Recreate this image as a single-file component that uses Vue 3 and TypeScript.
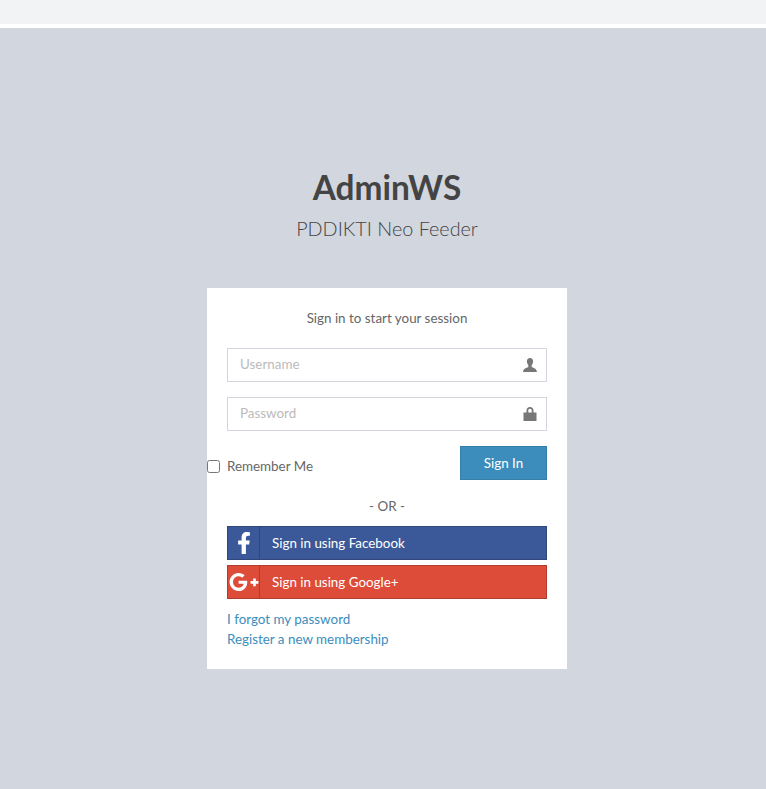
<template>
  <div class="page">
    <div class="topbar"></div>
    <main class="login">
      <header class="logo">
        <h1>AdminWS</h1>
        <p>PDDIKTI Neo Feeder</p>
      </header>

      <section class="box">
        <p class="msg">Sign in to start your session</p>

        <form class="form" @submit.prevent>
          <div v-for="f in fields" :key="f.name" class="field">
            <input :type="f.type" :placeholder="f.name" />
            <svg class="field-icon" viewBox="0 0 16 16" aria-hidden="true">
              <path :d="f.icon" />
            </svg>
          </div>

          <div class="actions">
            <label class="remember"><input type="checkbox" />Remember Me</label>
            <button type="submit" class="signin">Sign In</button>
          </div>
        </form>

        <p class="or">- OR -</p>

        <a v-for="s in socials" :key="s.label" href="#" class="social" :class="s.cls">
          <span class="social-icon">
            <svg :viewBox="s.box" :class="s.cls + '-glyph'" aria-hidden="true"><path :d="s.icon" /></svg>
          </span>
          <span class="social-label">{{ s.label }}</span>
        </a>

        <div class="links">
          <a href="#">I forgot my password</a>
          <a href="#">Register a new membership</a>
        </div>
      </section>
    </main>
  </div>
</template>

<script setup lang="ts">
const fields = [
  {
    name: 'Username',
    type: 'text',
    icon: 'M8 1C6 1 4.900 2.500 4.900 4.500C4.900 5.900 5.500 7.200 6.300 7.900V10.100C5.700 10.700 1.500 11.200 1 15H15C14.500 11.200 10.300 10.700 9.700 10.100V7.900C10.500 7.200 11.100 5.900 11.100 4.500C11.100 2.500 10 1 8 1Z',
  },
  {
    name: 'Password',
    type: 'password',
    icon: 'M8 1C5.800 1 4.500 2.600 4.500 4.500V6.500H1.500V15H14.500V6.500H11.500V4.500C11.500 2.600 10.200 1 8 1ZM6.300 4.500C6.300 3.400 7 2.700 8 2.700S9.700 3.400 9.700 4.500V6.500H6.300Z',
  },
]

const socials = [
  {
    label: 'Sign in using Facebook',
    cls: 'facebook',
    box: '0 0 320 512',
    icon: 'M279.14 288l14.22-92.66h-88.91v-60.13c0-25.35 12.42-50.06 52.24-50.06h40.42V6.26S260.43 0 225.36 0c-73.22 0-121.08 44.38-121.08 124.72v70.62H22.89V288h81.39v224h100.17V288z',
  },
  {
    label: 'Sign in using Google+',
    cls: 'google',
    box: '0 0 640 512',
    icon: 'M386.061 228.496c1.834 9.692 3.143 19.384 3.143 31.956C389.204 370.205 315.599 448 204.8 448c-106.084 0-192-85.915-192-192s85.916-192 192-192c51.864 0 95.083 18.859 128.611 50.292l-52.126 50.03c-14.145-13.621-39.028-29.599-76.485-29.599-65.484 0-118.92 54.221-118.92 121.277 0 67.056 53.436 121.277 118.92 121.277 75.961 0 104.513-54.745 108.965-82.773H204.8v-66.009h181.261zm185.406 6.437V179.2h-56.001v55.733h-55.733v56.001h55.733v55.733h56.001v-55.733H627.2v-56.001h-55.733z',
  },
]
</script>

<style>
html,
body {
  margin: 0;
  background: #d2d6de;
}
</style>

<style scoped>
.page {
  font-family: Lato, 'Open Sans', sans-serif;
  font-size: 13.4px;
  line-height: 20px;
  color: #666;
}

.topbar {
  height: 24px;
  background: #f1f3f5;
  border-bottom: 4px solid #fff;
}

.login {
  box-sizing: border-box;
  height: 761px;
  padding: 138px 0 0 207px;
  background: #d2d6de;
}

.logo {
  width: 360px;
  height: 122px;
  text-align: center;
  color: #444;
}

.logo h1 {
  margin: 0;
  font-size: 33.4px;
  line-height: 42px;
  font-weight: 700;
}

.logo p {
  margin: 0;
  font-size: 19.8px;
  line-height: 41px;
  font-weight: 300;
}

.box {
  box-sizing: border-box;
  width: 360px;
  height: 381px;
  padding: 20px;
  background: #fff;
}

.msg {
  margin: 0 0 20px;
  text-align: center;
}

.form {
  display: flex;
  flex-direction: column;
}

.field {
  position: relative;
  margin-bottom: 15px;
}

.field input {
  display: block;
  box-sizing: border-box;
  width: 100%;
  height: 34px;
  padding: 5px 34px 7px 12px;
  border: 1px solid #d2d6de;
  border-radius: 0;
  outline: none;
  font: inherit;
  color: #555;
}

.field input::placeholder {
  color: #bbb;
  opacity: 1;
}

.field-icon {
  position: absolute;
  top: 9px;
  right: 9px;
  width: 16px;
  height: 16px;
  fill: #777;
}

.actions {
  display: flex;
  justify-content: space-between;
  align-items: center;
  height: 34px;
}

.remember {
  display: flex;
  align-items: center;
  gap: 7px;
  margin: 6px 0 0 -20px;
}

.remember input {
  width: 13px;
  height: 13px;
  margin: 0;
}

.signin {
  box-sizing: border-box;
  width: 87px;
  height: 34px;
  padding: 0;
  border: 1px solid #367fa9;
  border-radius: 0;
  background: #3c8dbc;
  color: #fff;
  font: inherit;
}

.or {
  margin: 16px 0 10px;
  text-align: center;
}

.social {
  display: flex;
  box-sizing: border-box;
  height: 34px;
  margin-bottom: 5px;
  border: 1px solid rgba(0, 0, 0, 0.2);
  color: #fff;
  text-decoration: none;
  line-height: 32px;
}

.facebook {
  background: #3b5998;
}

.google {
  background: #dd4b39;
}

.social-icon {
  display: flex;
  flex: none;
  box-sizing: border-box;
  align-items: center;
  justify-content: center;
  width: 32px;
  border-right: 1px solid rgba(0, 0, 0, 0.2);
}

.social-icon svg {
  flex: none;
  fill: #fff;
}

.facebook-glyph {
  width: 14px;
  height: 22px;
}

.google-glyph {
  width: 30px;
  height: 24px;
}

.social-label {
  padding-left: 12px;
}

.links {
  display: flex;
  flex-direction: column;
  margin-top: 10px;
}

.links a {
  color: #3c8dbc;
  text-decoration: none;
}
</style>
